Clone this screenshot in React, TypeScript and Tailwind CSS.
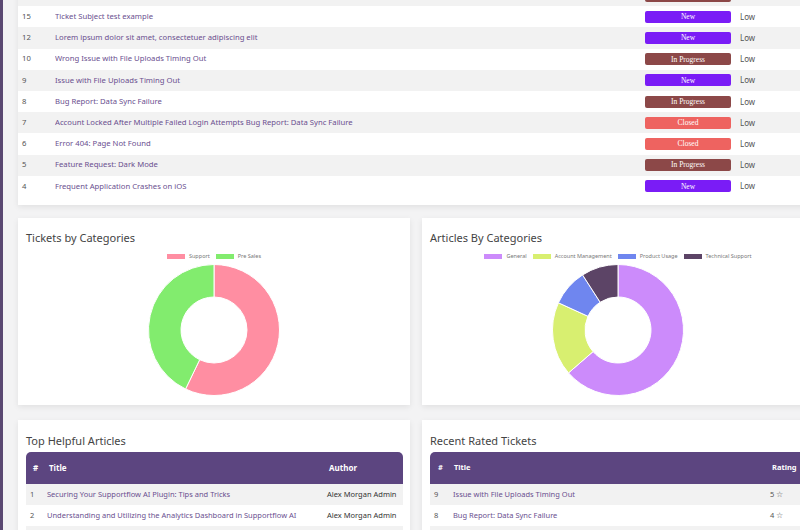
import React from 'react';

type Status = 'New' | 'In Progress' | 'Closed';

const tickets: { id: number; title: string; status: Status }[] = [
  { id: 16, title: 'Unable to Reset Password via Email Link', status: 'In Progress' },
  { id: 15, title: 'Ticket Subject test example', status: 'New' },
  { id: 12, title: 'Lorem ipsum dolor sit amet, consectetuer adipiscing elit', status: 'New' },
  { id: 10, title: 'Wrong Issue with File Uploads Timing Out', status: 'In Progress' },
  { id: 9, title: 'Issue with File Uploads Timing Out', status: 'New' },
  { id: 8, title: 'Bug Report: Data Sync Failure', status: 'In Progress' },
  { id: 7, title: 'Account Locked After Multiple Failed Login Attempts Bug Report: Data Sync Failure', status: 'Closed' },
  { id: 6, title: 'Error 404: Page Not Found', status: 'Closed' },
  { id: 5, title: 'Feature Request: Dark Mode', status: 'In Progress' },
  { id: 4, title: 'Frequent Application Crashes on iOS', status: 'New' },
];

const badgeClass: Record<Status, string> = {
  New: 'bg-[#7a1cf6]',
  'In Progress': 'bg-[#8c4848]',
  Closed: 'bg-[#ee6360]',
};

function polar(cx: number, cy: number, r: number, deg: number) {
  const a = ((deg - 90) * Math.PI) / 180;
  return [cx + r * Math.cos(a), cy + r * Math.sin(a)];
}

function segment(cx: number, cy: number, R: number, r: number, a0: number, a1: number) {
  const large = a1 - a0 > 180 ? 1 : 0;
  const [x0, y0] = polar(cx, cy, R, a0);
  const [x1, y1] = polar(cx, cy, R, a1);
  const [x2, y2] = polar(cx, cy, r, a1);
  const [x3, y3] = polar(cx, cy, r, a0);
  return `M${x0} ${y0} A${R} ${R} 0 ${large} 1 ${x1} ${y1} L${x2} ${y2} A${r} ${r} 0 ${large} 0 ${x3} ${y3} Z`;
}

function Donut({ data }: { data: { value: number; color: string }[] }) {
  const total = data.reduce((s, d) => s + d.value, 0);
  let acc = 0;
  return (
    <svg width="134" height="134" viewBox="0 0 134 134">
      {data.map((d, i) => {
        const a0 = (acc / total) * 360;
        acc += d.value;
        const a1 = (acc / total) * 360;
        return <path key={i} d={segment(67, 67, 65.5, 33, a0, a1)} fill={d.color} stroke="#fff" strokeWidth="1" />;
      })}
    </svg>
  );
}

function Legend({ items }: { items: { label: string; color: string }[] }) {
  return (
    <div className="flex justify-center gap-[6px] text-[5.5px] text-[#777] leading-none">
      {items.map((it) => (
        <div key={it.label} className="flex items-center gap-[4px]">
          <span className="w-[18px] h-[5px]" style={{ background: it.color }} />
          <span>{it.label}</span>
        </div>
      ))}
    </div>
  );
}

const ticketCats = [
  { label: 'Support', color: '#ff8ea2', value: 4 },
  { label: 'Pre Sales', color: '#82ec6e', value: 3 },
];

const articleCats = [
  { label: 'General', color: '#cc8bfb', value: 7 },
  { label: 'Account Management', color: '#d8ef70', value: 2 },
  { label: 'Product Usage', color: '#6f86ef', value: 1 },
  { label: 'Technical Support', color: '#5c4466', value: 1 },
];

export default function App() {
  return (
    <div className="w-[800px] h-[530px] overflow-hidden bg-[#f3f3f4] flex" style={{ fontFamily: '"Noto Sans", "Open Sans", sans-serif' }}>
      <div className="w-[3px] shrink-0 bg-[#5a4872]" />
      <div className="shrink-0 w-[796px] ml-[15px] -mt-[15px] flex flex-col">
        {/* recent tickets */}
        <div className="bg-white shadow-[0_2px_6px_rgba(0,0,0,0.08)] pb-[8px]">
          {tickets.map((t, i) => (
            <div key={t.id} className={`h-[21.2px] flex items-center text-[7.7px] ${i % 2 === 0 ? 'bg-[#f2f2f2]' : 'bg-white'}`}>
              <div className="w-[37px] pl-[4px] text-[#555]">{t.id}</div>
              <div className="w-[590px] text-[#6a4f8f] truncate">{t.title}</div>
              <div className={`w-[86px] h-[12px] rounded-[2px] flex items-center justify-center text-white text-[7.5px] ${badgeClass[t.status]}`} style={{ fontFamily: '"Liberation Serif", serif' }}>
                {t.status}
              </div>
              <div className="pl-[9px] text-[#555] text-[8px]">Low</div>
            </div>
          ))}
        </div>

        {/* charts */}
        <div className="mt-[13px] flex gap-[12px]">
          {[
            { title: 'Tickets by Categories', data: ticketCats },
            { title: 'Articles By Categories', data: articleCats },
          ].map((c) => (
            <div key={c.title} className="w-[392px] h-[187px] bg-white shadow-[0_2px_6px_rgba(0,0,0,0.08)] px-[8px] pt-[12px]">
              <div className="text-[11px] text-[#444] leading-[16px]">{c.title}</div>
              <div className="mt-[8px]">
                <Legend items={c.data} />
              </div>
              <div className="flex justify-center mt-[4px]">
                <Donut data={c.data} />
              </div>
            </div>
          ))}
        </div>

        {/* bottom tables */}
        <div className="mt-[15px] flex gap-[12px]">
          <div className="w-[392px] h-[140px] bg-white shadow-[0_2px_6px_rgba(0,0,0,0.08)] pl-[8px] pr-[7px] pt-[14px]">
            <div className="text-[11px] text-[#444] leading-[14px]">Top Helpful Articles</div>
            <div className="mt-[4px] h-[32px] bg-[#5c4580] rounded-t-[5px] flex items-center text-white font-bold text-[8px]">
              <div className="w-[23px] pl-[7px]">#</div>
              <div className="flex-1">Title</div>
              <div className="w-[74px]">Author</div>
            </div>
            {[
              { n: 1, t: 'Securing Your Supportflow AI Plugin: Tips and Tricks' },
              { n: 2, t: 'Understanding and Utilizing the Analytics Dashboard in Supportflow AI' },
              { n: 3, t: 'Getting Started with Supportflow AI' },
            ].map((r, i) => (
              <div key={r.n} className={`h-[21px] flex items-center text-[7.5px] ${i % 2 === 0 ? 'bg-[#f2f2f2]' : 'bg-white'}`}>
                <div className="w-[21px] pl-[4px] text-[#555]">{r.n}</div>
                <div className="flex-1 text-[#6a4f8f] truncate">{r.t}</div>
                <div className="w-[76px] text-[#333]">Alex Morgan Admin</div>
              </div>
            ))}
          </div>
          <div className="w-[392px] h-[140px] bg-white shadow-[0_2px_6px_rgba(0,0,0,0.08)] pl-[8px] pt-[14px]">
            <div className="text-[11px] text-[#444] leading-[14px]">Recent Rated Tickets</div>
            <div className="mt-[4px] h-[32px] bg-[#5c4580] rounded-t-[5px] flex items-center text-white font-bold text-[7.5px]">
              <div className="w-[24px] pl-[8px]">#</div>
              <div className="flex-1">Title</div>
              <div className="w-[42px]">Rating</div>
            </div>
            {[
              { n: 9, t: 'Issue with File Uploads Timing Out', r: 5 },
              { n: 8, t: 'Bug Report: Data Sync Failure', r: 4 },
              { n: 7, t: 'Account Locked After Multiple Failed Login Attempts', r: 4 },
            ].map((r, i) => (
              <div key={r.n} className={`h-[21px] flex items-center text-[7.5px] ${i % 2 === 0 ? 'bg-[#f2f2f2]' : 'bg-white'}`}>
                <div className="w-[23px] pl-[4px] text-[#555]">{r.n}</div>
                <div className="flex-1 text-[#6a4f8f] truncate">{r.t}</div>
                <div className="w-[44px] text-[#555]">{r.r} ☆</div>
              </div>
            ))}
          </div>
        </div>
      </div>
    </div>
  );
}
